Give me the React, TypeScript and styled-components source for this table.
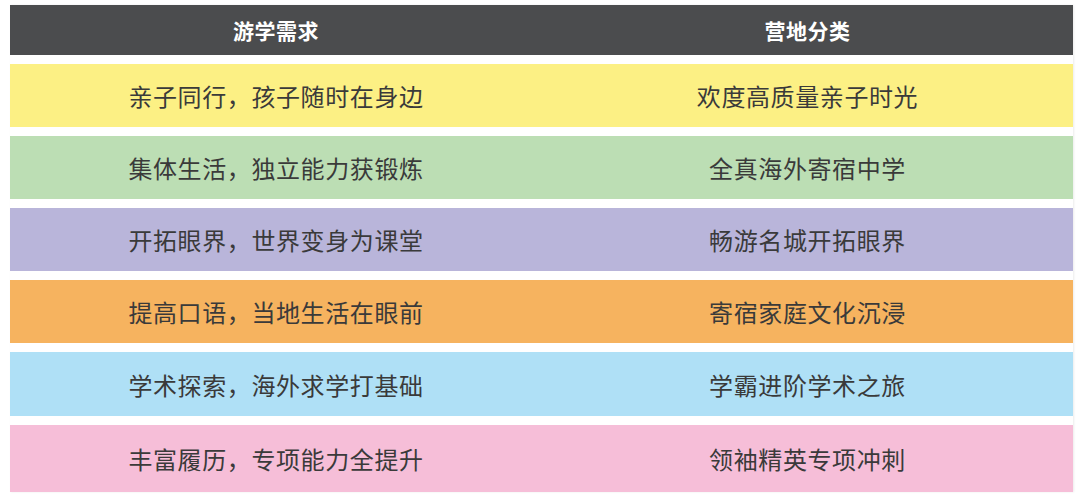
import React, { FC } from "react";
import styled, { createGlobalStyle } from "styled-components";

const GlobalStyle = createGlobalStyle`
  html, body {
    margin: 0;
    padding: 0;
    background: #ffffff;
  }
  body {
    font-family: "Noto Sans CJK SC", "Noto Sans", sans-serif;
  }
`;

const Page = styled.div`
  width: 1080px;
  height: 501px;
  box-sizing: border-box;
  padding: 5px 7px 0 10px;
  background: #ffffff;
  border-top: 2px solid #ece9e6;
  margin-top: -2px;
`;

const Table = styled.div`
  display: flex;
  flex-direction: column;
  gap: 9px;
  box-shadow: 1px 0 2px rgba(0, 0, 0, 0.08);
`;

const Row = styled.div<{ $bg: string; $height: number }>`
  display: grid;
  grid-template-columns: 532px 1fr;
  height: ${props => props.$height}px;
  background: ${props => props.$bg};
`;

const HeadCell = styled.div`
  display: flex;
  align-items: center;
  justify-content: center;
  color: #ffffff;
  font-size: 21px;
  font-weight: 700;
  letter-spacing: 0.5px;
`;

const Cell = styled.div`
  display: flex;
  align-items: center;
  justify-content: center;
  color: #3a3a3a;
  font-size: 24px;
  letter-spacing: 0.6px;
`;

interface Item {
  need: string;
  camp: string;
  color: string;
  height: number;
}

const items: Item[] = [
  { need: "亲子同行，孩子随时在身边", camp: "欢度高质量亲子时光", color: "#fcf084", height: 63 },
  { need: "集体生活，独立能力获锻炼", camp: "全真海外寄宿中学", color: "#bcdeb4", height: 63 },
  { need: "开拓眼界，世界变身为课堂", camp: "畅游名城开拓眼界", color: "#b9b5da", height: 63 },
  { need: "提高口语，当地生活在眼前", camp: "寄宿家庭文化沉浸", color: "#f6b35f", height: 63 },
  { need: "学术探索，海外求学打基础", camp: "学霸进阶学术之旅", color: "#afe0f6", height: 64 },
  { need: "丰富履历，专项能力全提升", camp: "领袖精英专项冲刺", color: "#f6bed8", height: 67 }
];

const App: FC = () => {
  return (
    <Page>
      <GlobalStyle />
      <Table>
        <Row $bg="#4b4c4e" $height={50}>
          <HeadCell>游学需求</HeadCell>
          <HeadCell>营地分类</HeadCell>
        </Row>
        {items.map(item => (
          <Row key={item.need} $bg={item.color} $height={item.height}>
            <Cell>{item.need}</Cell>
            <Cell>{item.camp}</Cell>
          </Row>
        ))}
      </Table>
    </Page>
  );
};

export default App;
